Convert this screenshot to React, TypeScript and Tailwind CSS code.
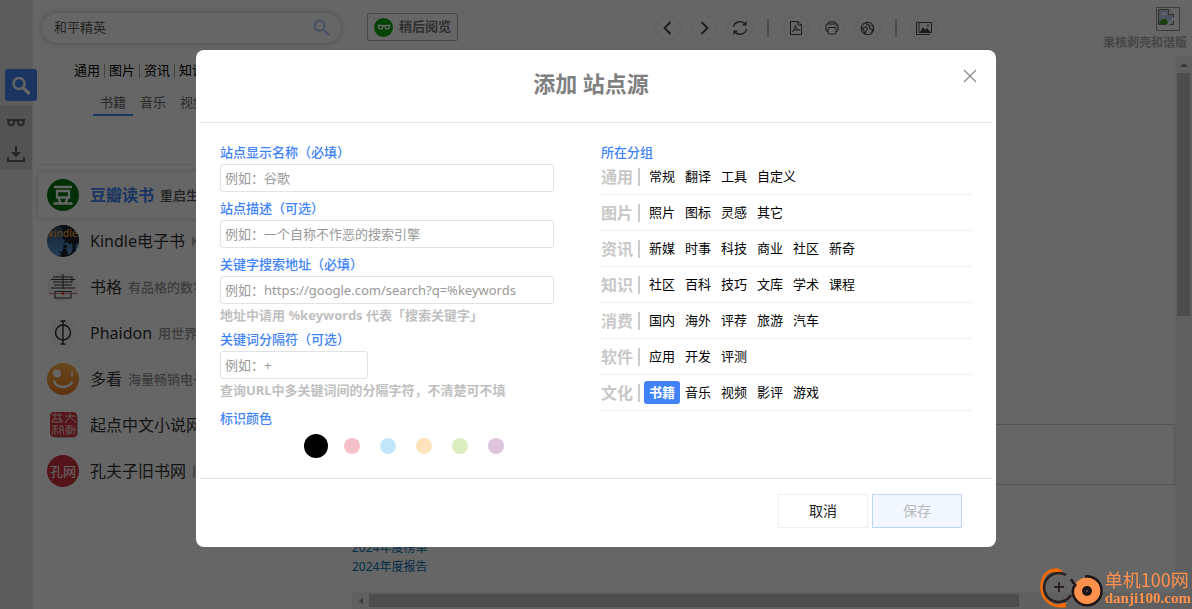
import type { ReactNode } from "react";
import { IoPrintOutline } from "react-icons/io5";
import { MdSearch } from "react-icons/md";
import clsx from "clsx";

const categories = ["通用", "图片", "资讯", "知识", "消费", "软件", "文化"];
const subCategories = ["书籍", "音乐", "视频", "影评", "游戏"];

const groups = [
  { name: "通用", items: ["常规", "翻译", "工具", "自定义"] },
  { name: "图片", items: ["照片", "图标", "灵感", "其它"] },
  { name: "资讯", items: ["新媒", "时事", "科技", "商业", "社区", "新奇"] },
  { name: "知识", items: ["社区", "百科", "技巧", "文库", "学术", "课程"] },
  { name: "消费", items: ["国内", "海外", "评荐", "旅游", "汽车"] },
  { name: "软件", items: ["应用", "开发", "评测"] },
  { name: "文化", items: ["书籍", "音乐", "视频", "影评", "游戏"] },
];

const colors = [
  { name: "黑色", bg: "bg-black" },
  { name: "粉色", bg: "bg-[#f5c0c9]" },
  { name: "蓝色", bg: "bg-[#c3e7fa]" },
  { name: "橙色", bg: "bg-[#fde2bd]" },
  { name: "绿色", bg: "bg-[#dcedc2]" },
  { name: "紫色", bg: "bg-[#ddc5dd]" },
];

function Glasses({ className }: { className?: string }) {
  return (
    <svg viewBox="0 0 20 10" className={className} fill="none" stroke="currentColor" strokeWidth="2">
      <path d="M2.500 2h5.500v3a2.800 2.800 0 0 1-5.500 0zM12 2h5.500v3a2.800 2.800 0 0 1-5.500 0z" strokeLinejoin="round" />
      <path d="M1 2h3M8 3q2-1.500 4 0M16 2h3" />
    </svg>
  );
}

function DownloadIcon() {
  return (
    <svg viewBox="0 0 20 18" className="h-[18px] w-5" fill="currentColor">
      <path d="M9 1h2v6h4l-5 5.500L5 7h4z" />
      <path d="M1 12h2v3h14v-3h2v5H1z" />
    </svg>
  );
}

function DoubanLogo() {
  return (
    <svg viewBox="0 0 32 32" className="size-8">
      <circle cx="16" cy="16" r="16" fill="#007711" />
      <g fill="none" stroke="#fff" strokeWidth="2.300">
        <path d="M7 8h18M6.500 24.500h19M11.500 19l2 5M20.500 19l-2 5" />
        <path d="M10 12h12v6.500H10z" />
      </g>
    </svg>
  );
}

function KindleLogo() {
  return (
    <svg viewBox="0 0 32 32" className="size-8">
      <defs>
        <clipPath id="kindle-clip">
          <circle cx="16" cy="16" r="16" />
        </clipPath>
        <linearGradient id="kindle-sky" x1="0" y1="0" x2="0" y2="1">
          <stop offset="0" stopColor="#303a48" />
          <stop offset="0.4" stopColor="#47719e" />
          <stop offset="1" stopColor="#5c98dc" />
        </linearGradient>
      </defs>
      <g clipPath="url(#kindle-clip)">
        <rect width="32" height="32" fill="url(#kindle-sky)" />
        <path d="M14 0h18v18l-3 1c-1 4 0 8 3 11v2H20l3-3c3-3 3-7 2-11l-3 1-2-2-3 1 1-3-3-2 2-3z" fill="#1d2430" />
        <path d="M8 32l6-2 18-1v3z" fill="#18202c" />
        <circle cx="18" cy="21.500" r="1.800" fill="#18202c" />
        <path d="M12 26l3 1 1.500-4 3 1 2 7h-7l-.500-2z" fill="#18202c" />
        <text x="16" y="12" textAnchor="middle" fontSize="10" fontWeight="500" fill="#f0a343">
          kindle
        </text>
      </g>
    </svg>
  );
}

function ShugeLogo() {
  return (
    <svg viewBox="0 0 32 32" className="size-8">
      <circle cx="16" cy="16" r="15.500" fill="#f4f4f4" />
      <g fill="none" stroke="#3b3b3b" strokeWidth="1.100">
        <path d="M6 6h19v5H6M4 8.500h24M16 3v15M7 14h18M4 17h24" />
        <path d="M8 20.500h16V27H8z" />
      </g>
      <path d="M2 22.500h28" stroke="#d08080" strokeWidth="1" />
      <circle cx="16" cy="22.500" r="1.200" fill="#d00" />
    </svg>
  );
}

function PhaidonLogo() {
  return (
    <svg viewBox="0 0 32 32" className="size-8" fill="none" stroke="#2c2c2c">
      <circle cx="16" cy="16" r="15.500" fill="#fafafa" stroke="none" />
      <path d="M16 4v23M13.500 4h5M13.500 27h5" strokeWidth="1.400" />
      <ellipse cx="16" cy="15.500" rx="7.500" ry="7.500" strokeWidth="1.500" />
    </svg>
  );
}

function DuokanLogo() {
  return (
    <svg viewBox="0 0 32 32" className="size-8">
      <defs>
        <linearGradient id="duokan" x1="0" y1="0" x2="0" y2="1">
          <stop offset="0" stopColor="#ffb347" />
          <stop offset="1" stopColor="#f0802a" />
        </linearGradient>
      </defs>
      <circle cx="16" cy="16" r="16" fill="url(#duokan)" />
      <circle cx="10" cy="10.500" r="4" fill="#fff" />
      <path d="M25 8v5.500" stroke="#fff" strokeWidth="1.600" />
      <path d="M6.500 17.500q3 6.500 9.500 6.500t9.500-5.500" fill="none" stroke="#fff" strokeWidth="2.400" />
    </svg>
  );
}

function QidianLogo() {
  return (
    <svg viewBox="0 0 32 32" className="size-8">
      <rect x="4" y="4" width="27" height="25" rx="5" fill="#bbb" />
      <rect x="3" y="3" width="27" height="25" rx="4" fill="#d93a42" />
      {/* seal carving */}
      <g fill="none" stroke="#f3dada" strokeWidth="1">
        <path d="M5 6h10M8 4v4l-3 5M12 4q0 6 4 8M5 13h11M7 10h6v3M18 7h11M23 4v4l-5 6M23 8l6 6" />
        <path d="M5 17h6M8 16v10M5 20h6M6 22l-1 4M10 22l1 3M13 17v9M13 17h3v4h-3M16 21l1 5" />
        <path d="M19 17h6M19 19h6v3h-6zM22 16v6M19 24h6M20 26l4-3M27 17v9M27 20l2 1" />
      </g>
    </svg>
  );
}

function KongfzLogo() {
  return (
    <svg viewBox="0 0 32 32" className="size-8">
      <circle cx="16" cy="16" r="16" fill="#d23341" />
      <text x="16" y="21" textAnchor="middle" fontSize="13" fill="#fff">
        孔网
      </text>
    </svg>
  );
}

const sites = [
  { name: "豆瓣读书", desc: "重启生活", logo: <DoubanLogo />, active: true },
  { name: "Kindle电子书", desc: "Kindle商店", logo: <KindleLogo /> },
  { name: "书格", desc: "有品格的数字古籍", logo: <ShugeLogo /> },
  { name: "Phaidon", desc: "用世界的艺术", logo: <PhaidonLogo /> },
  { name: "多看", desc: "海量畅销电子书", logo: <DuokanLogo /> },
  { name: "起点中文小说网", desc: "小说", logo: <QidianLogo /> },
  { name: "孔夫子旧书网", desc: "旧书", logo: <KongfzLogo /> },
];

function SideNav() {
  return (
    <nav className="flex w-8 shrink-0 flex-col bg-[#e7e7e7] pt-[69px] text-[#606060]">
      <button
        aria-label="搜索"
        className="relative ml-[5px] flex size-8 items-center justify-center rounded-[3px] bg-[#4285f4] text-white"
      >
        <svg viewBox="0 0 32 32" className="size-8" fill="none" stroke="currentColor">
          <circle cx="14" cy="14.500" r="5.500" strokeWidth="2.400" />
          <path d="m18 18.500 1.500 1.500" strokeWidth="2.400" />
          <path d="m19 19.500 5.500 5.500" strokeWidth="3.600" />
        </svg>
      </button>
      <div className="mt-[5px] flex flex-col bg-[#d0d0d0]">
        <button aria-label="稍后阅览" className="flex h-8 items-center justify-center pt-[2px]">
          <Glasses className="h-[10px] w-5" />
        </button>
        <button aria-label="下载" className="flex h-8 items-center justify-center">
          <DownloadIcon />
        </button>
      </div>
    </nav>
  );
}

function SitePanel() {
  return (
    <aside className="flex w-80 shrink-0 flex-col border-l border-[#eee] bg-white">
      <div className="mt-[13px] mr-[11px] ml-[9px] flex h-[30px] items-center rounded-full pr-2 pl-3 shadow-[0_0_6px_rgba(0,0,0,0.25)]">
        <input
          aria-label="搜索关键字"
          defaultValue="和平精英"
          className="min-w-0 flex-1 bg-transparent text-[13px] text-[#555] outline-none"
        />
        <button aria-label="搜索" className="text-[#a9c4f5]">
          <MdSearch className="size-[22px]" />
        </button>
      </div>

      <div className="mt-4 ml-[41px] flex h-6 items-center overflow-hidden text-[13px] whitespace-nowrap">
        {categories.map((c, i) => (
          <span key={c} className="flex items-center">
            {i > 0 && <i className="mx-1 h-[14px] w-px bg-[#aaa]" />}
            <button>{c}</button>
          </span>
        ))}
      </div>
      <div className="mt-2 ml-[60px] flex overflow-hidden text-[13px] text-[#666] whitespace-nowrap">
        {subCategories.map((c, i) => (
          <button
            key={c}
            className={clsx("h-[25px] w-10 shrink-0 border-b-2", i === 0 ? "border-[#4285f4]" : "border-transparent")}
          >
            {c}
          </button>
        ))}
      </div>

      <ul className="mt-12 ml-[5px] border-t border-[#e9e9e9] pt-[7px]">
        {sites.map((s) => (
          <li
            key={s.name}
            className={clsx(
              "flex h-[46px] items-center overflow-hidden pl-[9px] whitespace-nowrap",
              s.active && "rounded-[3px] shadow-[0_0_5px_rgba(0,0,0,0.2)]"
            )}
          >
            {s.logo}
            <a
              href="#"
              className={clsx("ml-[11px] text-base", s.active ? "font-bold text-[#4285f4]" : "text-[#333]")}
            >
              {s.name}
            </a>
            <span className={clsx("ml-[6px] pt-[2px] text-[13px] font-medium", s.active ? "text-[#555]" : "text-[#999]")}>
              {s.desc}
            </span>
          </li>
        ))}
      </ul>
    </aside>
  );
}

function ToolButton({ label, children }: { label: string; children: ReactNode }) {
  return (
    <button
      aria-label={label}
      className="flex size-[26px] items-center justify-center rounded-full border border-[#f0f0f0] text-[#444]"
    >
      {children}
    </button>
  );
}

function Toolbar() {
  return (
    <header className="flex h-14 shrink-0 items-start pr-[5px] pl-[15px]">
      <button className="mt-[13px] flex h-7 items-center gap-[6px] rounded-[2px] border border-[#b5b5b5] px-[6px] text-[13px] font-bold text-[#777]">
        <span className="flex size-[19px] items-center justify-center rounded-full bg-[#0aa80a] text-white">
          <Glasses className="h-[7px] w-[14px]" />
        </span>
        稍后阅览
      </button>

      <div className="mt-[15px] flex flex-1 items-center justify-center gap-[10px] pl-[30px]">
        <ToolButton label="后退">
          <svg viewBox="0 0 14 14" className="size-[14px]" fill="none" stroke="currentColor" strokeWidth="1.800">
            <path d="M9.500 1 3.500 7l6 6" />
          </svg>
        </ToolButton>
        <ToolButton label="前进">
          <svg viewBox="0 0 14 14" className="size-[14px]" fill="none" stroke="currentColor" strokeWidth="1.800">
            <path d="m4.500 1 6 6-6 6" />
          </svg>
        </ToolButton>
        <ToolButton label="刷新">
          <svg viewBox="0 0 16 16" className="size-4 shrink-0" fill="none" stroke="currentColor" strokeWidth="1.300">
            <path d="M1.500 7a6.500 6 0 0 1 11.500-3M14.500 9A6.500 6 0 0 1 3 12" />
            <path d="M14.500 1v4.500H10zM1.500 15v-4.500H6z" fill="currentColor" stroke="none" />
          </svg>
        </ToolButton>
        <i className="mx-1 h-[18px] w-[2px] bg-[#bbb]" />
        <ToolButton label="导出PDF">
          <svg viewBox="0 0 14 14" className="size-[14px]" fill="none" stroke="currentColor">
            <path d="M1.500.500h7.500l3.500 3.500v9.500h-11zM9 .500V4h3.500" />
            <path d="M6.500 4c-.500 3-1.500 5.500-3.500 7M6.500 5c.500 2.500 2 4 5 4.200M4 9.800q2.500-1 5.500-1" />
          </svg>
        </ToolButton>
        <ToolButton label="打印">
          <IoPrintOutline className="size-4" />
        </ToolButton>
        <ToolButton label="浏览器打开">
          <svg viewBox="0 0 16 16" className="size-[15px]" fill="none" stroke="currentColor" strokeWidth="1.100">
            <circle cx="8" cy="8" r="6.700" />
            <path d="M1.500 7l2 .500 1.500-1 2 .500 1 1.500-1.500 2-.500 2.500-1.500-1-.500-2.500L2 8.500" />
            <path d="M8 1.500 6.500 3l1 1.500L9 4l1.500 1-.500 2 1.500 2 1.500-.500.500 1.500-1.500 2.500M14 5.500l-2-.500" />
          </svg>
        </ToolButton>
        <i className="mx-1 h-[18px] w-[2px] bg-[#bbb]" />
        <ToolButton label="截图">
          <svg viewBox="0 0 16 14" className="h-[14px] w-4 shrink-0" fill="none" stroke="currentColor">
            <path d="M3 1.500h12.500v10H3z" />
            <path d="M3 1H.500v12.500H14" />
            <path d="m4 11 3-5 2 3 2-2 3.500 4z" fill="currentColor" stroke="none" />
            <circle cx="12" cy="4.500" r="1" fill="currentColor" stroke="none" />
          </svg>
        </ToolButton>
      </div>

      <div className="flex flex-col items-end text-xs font-bold text-[#b0b0b0]">
        <span className="mt-[7px] mr-[7px] flex size-6 border border-[#999] p-px">
          <svg viewBox="0 0 16 16" className="size-4">
            <path d="M.500.500h10l5 5v10H.500z" fill="#c3d4f5" stroke="#777" />
            <path d="M10.500.500v5h5" fill="#fff" stroke="#777" />
            <path d="M3 6q0-2 2-2 1-1.500 2.500 0Q9 4 9 6z" fill="#fff" />
            <path d="M1 15q2-6 7-5l3 5z" fill="#3fa31c" />
            <path d="m8 16 8-8v3l-5 5z" fill="#fff" />
          </svg>
        </span>
        <span className="mt-1 leading-4">果核剥壳和谐版</span>
      </div>
    </header>
  );
}

function WebView() {
  return (
    <div className="flex min-h-0 flex-1">
      <div className="flex min-w-0 flex-1 flex-col">
        <div className="flex flex-1 flex-col justify-end pb-4">
          <div className="h-[61px] border border-[#d5d5d5]" />
          <div className="mt-[53px] flex flex-col text-xs leading-[19px] text-[#0772b1]">
            <a href="#">2024年度榜单</a>
            <a href="#">2024年度报告</a>
          </div>
        </div>
        <div className="flex h-[17px] shrink-0 items-center bg-[#f1f1f1]">
          <span className="flex w-[17px] justify-center">
            <i className="border-y-4 border-r-4 border-y-transparent border-r-[#999]" />
          </span>
          <span className="h-[13px] w-[79%] bg-[#c1c1c1]" />
        </div>
      </div>
      <div className="flex w-[17px] shrink-0 flex-col items-center bg-[#f1f1f1]">
        <span className="flex h-[17px] items-center">
          <i className="border-x-4 border-b-4 border-x-transparent border-b-[#888]" />
        </span>
        <span className="h-[44%] w-[13px] bg-[#c1c1c1]" />
      </div>
    </div>
  );
}

interface FieldProps {
  id: string;
  label: string;
  placeholder: string;
  short?: boolean;
  hint?: string;
}

function Field({ id, label, placeholder, short, hint }: FieldProps) {
  return (
    <div className="flex flex-col">
      <label htmlFor={id} className="mb-[2px] text-[13px] leading-5 font-medium text-[#4083f7]">
        {label}
      </label>
      <input
        id={id}
        placeholder={placeholder}
        className={clsx(
          "h-7 rounded-[3px] border border-[#e2e2e2] px-1 text-[13px] outline-none placeholder:text-[#999]",
          short ? "w-[148px]" : "w-full"
        )}
      />
      {hint && <p className="mt-px text-[13px] leading-5 font-bold text-[#c0c0c0]">{hint}</p>}
    </div>
  );
}

function AddSiteDialog() {
  return (
    <form
      role="dialog"
      aria-labelledby="dialog-title"
      className="relative mt-[50px] w-full max-w-[800px] self-start rounded-lg bg-white px-1"
    >
      <h2 id="dialog-title" className="border-b border-[#e4e4e4] pt-4 pr-[10px] pb-[22px] text-center text-[22px] leading-[34px] font-bold text-[#808080]">
        添加 站点源
      </h2>
      <button type="button" aria-label="关闭" className="absolute top-[19px] right-[19px] text-[#888]">
        <svg viewBox="0 0 14 14" className="size-[14px]" fill="none" stroke="currentColor" strokeWidth="1.200">
          <path d="m1 1 12 12M13 1 1 13" />
        </svg>
      </button>

      <div className="grid grid-cols-[9fr_10fr] gap-[47px] px-5 pt-[19px] pb-5">
        <div className="flex flex-col">
          <div className="flex flex-col gap-[6px]">
            <Field id="name" label="站点显示名称（必填）" placeholder="例如：谷歌" />
            <Field id="desc" label="站点描述（可选）" placeholder="例如：一个自称不作恶的搜索引擎" />
            <Field
              id="url"
              label="关键字搜索地址（必填）"
              placeholder="例如：https://google.com/search?q=%keywords"
              hint="地址中请用 %keywords 代表「搜索关键字」"
            />
          </div>
          <div className="mt-1">
            <Field
              id="sep"
              label="关键词分隔符（可选）"
              placeholder="例如：+"
              short
              hint="查询URL中多关键词间的分隔字符，不清楚可不填"
            />
          </div>
          <fieldset className="mt-2">
            <legend className="text-[13px] leading-5 font-medium text-[#4083f7]">标识颜色</legend>
            <div className="mt-[6px] flex h-6 items-center justify-end pr-10">
              {colors.map((c, i) => (
                <label key={c.name} className="flex w-9 justify-center">
                  <input
                    type="radio"
                    name="color"
                    aria-label={c.name}
                    defaultChecked={i === 0}
                    className={clsx("size-4 shrink-0 appearance-none rounded-full checked:size-6", c.bg)}
                  />
                </label>
              ))}
            </div>
          </fieldset>
        </div>

        <div>
          <h3 className="h-[17px] text-[13px] leading-5 font-medium text-[#4083f7]">所在分组</h3>
          {groups.map((g) => (
            <div key={g.name} className="flex h-9 items-center border-b border-[#efefef]">
              <span className="w-8 shrink-0 text-base font-bold text-[#c8c8c8]">{g.name}</span>
              <i className="mr-1 ml-[5px] h-[18px] w-[2px] bg-[#ccc]" />
              {g.items.map((item) => (
                <button
                  key={item}
                  type="button"
                  className={clsx(
                    "h-[23px] rounded-[3px] px-[5px] text-[13px]",
                    g.name === "文化" && item === "书籍" ? "bg-[#4083f7] font-bold text-white" : "text-black"
                  )}
                >
                  {item}
                </button>
              ))}
            </div>
          ))}
        </div>
      </div>

      <div className="flex justify-end gap-1 border-t border-[#e4e4e4] pt-[15px] pr-[30px] pb-[19px] text-sm">
        <button type="button" className="h-[34px] w-[90px] border border-[#f0f0f0] text-[#222]">
          取消
        </button>
        <button type="submit" disabled className="h-[34px] w-[90px] border border-[#bdd4fb] bg-[#f3f7ff] text-[#b8b8b8]">
          保存
        </button>
      </div>
    </form>
  );
}

function Watermark() {
  return (
    <div className="fixed right-0 bottom-0 flex items-end gap-px text-[#ff914d]">
      <svg viewBox="0 0 64 42" className="h-[42px] w-16" fill="none">
        <path d="M22 5C9-1 1 9 1.500 21S12 41 26 39" stroke="#ff6a00" strokeWidth="2.500" />
        <path d="M10 5q6-7 12-1l-2 2zM17 38q5 5 10-2l-4 0z" fill="#ff6a00" />
        <path d="M26 8A14.500 14.500 0 1 0 31 28" stroke="#2b2020" strokeWidth="2.500" />
        <path d="M14 20h10M19 15v10" stroke="#2b2020" strokeWidth="1.800" />
        <circle cx="47" cy="24" r="13.500" fill="#ff914d" />
        <path d="M31 12q2 3 3 5M45 9.500A14.500 14.500 0 1 1 33 27q-1-6 3-10" stroke="#1f1717" strokeWidth="2.500" />
        <circle cx="47" cy="24" r="5" fill="#1f1717" />
        <circle cx="47" cy="24" r="1" fill="#555" />
      </svg>
      <div className="flex flex-col pr-px pb-[2px]">
        <span className="font-['Noto_Sans_CJK_SC',sans-serif] text-lg leading-5">单机100网</span>
        <span className="font-['Liberation_Serif',serif] text-[15px] leading-[18px] font-bold">danji100.com</span>
      </div>
    </div>
  );
}

export default function App() {
  return (
    <div className="flex h-screen overflow-hidden bg-white font-['Noto_Sans','Noto_Sans_CJK_SC',sans-serif]">
      <SideNav />
      <SitePanel />
      <main className="flex min-w-0 flex-1 flex-col">
        <Toolbar />
        <WebView />
      </main>
      <div className="fixed inset-0 flex justify-center bg-black/60 px-4">
        <AddSiteDialog />
      </div>
      <Watermark />
    </div>
  );
}
